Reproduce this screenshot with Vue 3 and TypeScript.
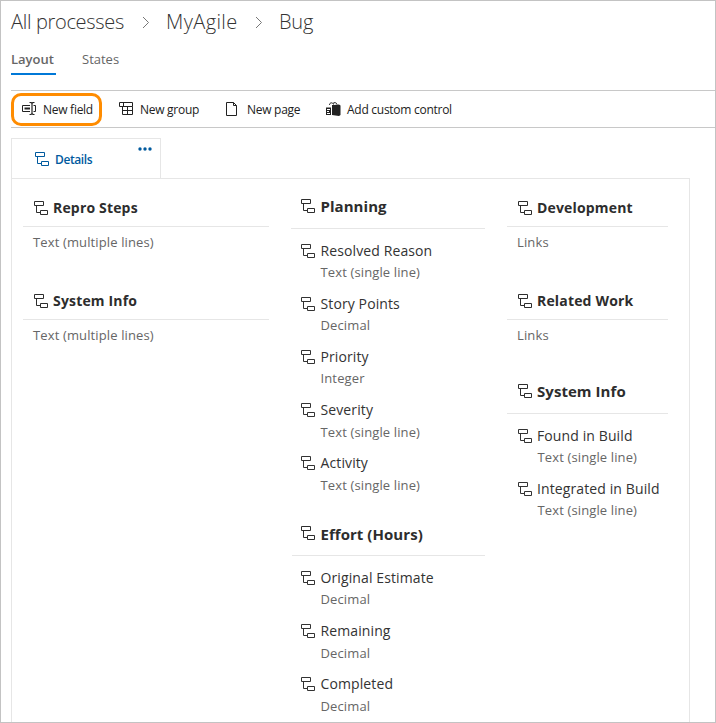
<script setup lang="ts">
import { h } from 'vue'

interface Field { name: string; type: string; loose?: boolean }
interface Group { title: string; kind: 'control' | 'fields'; type?: string; fields?: Field[] }
interface Column { id: string; groups: Group[] }

const columns: Column[] = [
  {
    id: 'left',
    groups: [
      { title: 'Repro Steps', kind: 'control', type: 'Text (multiple lines)' },
      { title: 'System Info', kind: 'control', type: 'Text (multiple lines)' },
    ],
  },
  {
    id: 'middle',
    groups: [
      {
        title: 'Planning',
        kind: 'fields',
        fields: [
          { name: 'Resolved Reason', type: 'Text (single line)' },
          { name: 'Story Points', type: 'Decimal' },
          { name: 'Priority', type: 'Integer' },
          { name: 'Severity', type: 'Text (single line)', loose: true },
          { name: 'Activity', type: 'Text (single line)', loose: true },
        ],
      },
      {
        title: 'Effort (Hours)',
        kind: 'fields',
        fields: [
          { name: 'Original Estimate', type: 'Decimal' },
          { name: 'Remaining', type: 'Decimal', loose: true },
          { name: 'Completed', type: 'Decimal', loose: true },
        ],
      },
    ],
  },
  {
    id: 'right',
    groups: [
      { title: 'Development', kind: 'control', type: 'Links' },
      { title: 'Related Work', kind: 'control', type: 'Links' },
      {
        title: 'System Info',
        kind: 'fields',
        fields: [
          { name: 'Found in Build', type: 'Text (single line)' },
          { name: 'Integrated in Build', type: 'Text (single line)' },
        ],
      },
    ],
  },
]

const TreeIcon = () =>
  h('svg', { width: 15, height: 15, viewBox: '0 0 15 15', fill: 'none', stroke: 'currentColor', 'stroke-width': 1 }, [
    h('path', { d: 'M.5.5h9v4h-9zM2.5 4.5v7h4M6.5 9.5h7v4h-7z' }),
  ])
</script>

<template>
  <div class="page">
    <nav class="crumbs">
      <span class="c1">All processes</span>
      <svg width="8" height="13" viewBox="0 0 8 13"><path d="M1 1l5.5 5.5L1 12" /></svg>
      <span class="c2">MyAgile</span>
      <svg width="8" height="13" viewBox="0 0 8 13"><path d="M1 1l5.5 5.5L1 12" /></svg>
      <span class="c3">Bug</span>
    </nav>
    <div class="pivots">
      <span class="pivot active">Layout</span>
      <span class="pivot">States</span>
    </div>
    <div class="toolbar">
      <button class="tool field">
        <svg width="15" height="14" viewBox="0 0 15 14" fill="none" stroke="currentColor">
          <path d="M8 3.500H.5v6H8M11.500 3.500h2v6h-2" /><path d="M2.500 6.500H8" stroke-width="2" />
          <path d="M7.500.5h1.500l1 1 1-1h1.500M10 1v11M7.500 12.500h1.500l1-1 1 1h1.500" stroke-width="1.200" />
        </svg>
        <span>New field</span>
      </button>
      <button class="tool group-tool">
        <svg width="15" height="14" viewBox="0 0 15 14" fill="none" stroke="currentColor">
          <path d="M.5.5h13v4H.5zM3.500 4.500v8h10v-8M3.500 8.500h10M8.500 4.500v8M4.500.5v4" />
        </svg>
        <span>New group</span>
      </button>
      <button class="tool page-tool">
        <svg width="13" height="15" viewBox="0 0 13 15" fill="none" stroke="currentColor">
          <path d="M.5.5h7l3 3v10H.5zM7.500.5v3h3" />
        </svg>
        <span>New page</span>
      </button>
      <button class="tool custom-tool">
        <svg width="15" height="14" viewBox="0 0 15 14">
          <path d="M6 3h2l5-.500 1.500 1V13L13 14 6 13z" fill="currentColor" />
          <path d="M0 5.500h5V13H0z" fill="currentColor" />
          <path d="M1 7.500h3M1 9.500h2M1 11.500h3" stroke="#fff" />
          <path d="M3.500 3C3.500.2 7 .2 7.500 2.500M7 1.500C8 .2 10.500.2 11 2.500" fill="none" stroke="currentColor" />
        </svg>
        <span>Add custom control</span>
      </button>
    </div>
    <div class="tab">
      <TreeIcon />
      <span class="tab-name">Details</span>
      <svg class="more" width="14" height="4" viewBox="0 0 14 4"><circle cx="2" cy="2" r="1.700" /><circle cx="7" cy="2" r="1.700" /><circle cx="12" cy="2" r="1.700" /></svg>
    </div>
    <main class="panel">
      <section v-for="col in columns" :key="col.id" class="column" :class="col.id">
        <div v-for="g in col.groups" :key="g.title" class="group" :class="g.kind">
          <h2 class="group-title"><TreeIcon /><span>{{ g.title }}</span></h2>
          <p v-if="g.type" class="type">{{ g.type }}</p>
          <div v-for="f in g.fields" :key="f.name" class="item" :class="{ loose: f.loose }">
            <div class="name"><TreeIcon /><span>{{ f.name }}</span></div>
            <p class="type">{{ f.type }}</p>
          </div>
        </div>
      </section>
    </main>
  </div>
</template>

<style>
body { margin: 0; background: #fff; }
</style>

<style scoped>
.page {
  box-sizing: border-box;
  width: 716px;
  height: 723px;
  overflow: hidden;
  border: 1px solid #c3c3c3;
  background: #fff;
  color: #333;
  font-family: "Open Sans", "Noto Sans", sans-serif;
  display: flex;
  flex-direction: column;
}
svg { flex: none; display: block; }
.crumbs { display: flex; align-items: center; height: 40px; padding-left: 10px; font-size: 20px; font-weight: 300; white-space: nowrap; }
.crumbs svg { margin: 3px 16px 0 18px; fill: none; stroke: #777; stroke-width: 1; }
.c1 { width: 113px; letter-spacing: -0.32px; }
.c2 { width: 71px; letter-spacing: 0.4px; }
.c3 { letter-spacing: -0.2px; }
.pivots { display: flex; gap: 26px; height: 49px; padding-left: 10px; font-size: 13px; color: #666; }
.pivot { box-sizing: border-box; height: 34px; line-height: 37px; }
.pivot.active { width: 45px; font-weight: 600; border-bottom: 2px solid #0078d7; }
.toolbar { display: flex; align-items: center; box-sizing: border-box; height: 38px; margin-left: 10px; border-top: 1px solid #c8c8c8; border-bottom: 1px solid #c8c8c8; }
.tool { box-sizing: border-box; display: flex; align-items: center; height: 33px; padding: 0; border: 0; background: none; font: 12px "Open Sans", "Noto Sans", sans-serif; letter-spacing: -0.27px; color: #222; white-space: nowrap; }
.tool span { line-height: 18px; padding-top: 2px; }
.field { width: 91px; padding-left: 8px; gap: 6px; border: 3px solid #ff8c00; border-radius: 10px; }
.group-tool { width: 107px; padding-left: 17px; gap: 6px; }
.page-tool { width: 99px; padding-left: 17px; gap: 8px; }
.custom-tool { padding-left: 18px; gap: 6px; }
.tab { box-sizing: border-box; display: flex; width: 150px; height: 40px; margin: 10px 0 0 10px; padding: 13px 8px 0 23px; border: 1px solid #e6e6e6; border-bottom: 0; color: #005a9e; }
.tab-name { margin-left: 5px; font-size: 12px; font-weight: 600; line-height: 16px; letter-spacing: -0.4px; }
.more { margin: -5px 0 0 auto; fill: currentColor; }
.panel { box-sizing: border-box; display: grid; grid-template-columns: 246px 195px 162px; column-gap: 21px; flex: 1; width: 679px; min-height: 0; margin-left: 10px; padding: 0 0 0 11px; border: 1px solid #e6e6e6; border-bottom: 0; }
.column.middle { margin-left: 1px; }
.column.right { margin-left: 1px; }
.group-title { box-sizing: border-box; display: flex; align-items: center; margin: 0; border-bottom: 1px solid #e6e6e6; font-size: 14px; font-weight: 700; letter-spacing: 0.17px; line-height: 20px; color: #2d2d2d; }
.group-title svg, .name svg { margin-right: 4px; }
.group { box-sizing: border-box; }
.control { height: 93px; padding-top: 19px; }
.control .group-title { height: 29px; padding: 0 0 8px 11px; }
.control .type { margin-left: 10px; line-height: 30px; }
.fields .group-title { height: 50px; align-items: flex-start; font-size: 15px; letter-spacing: 0.05px; }
.fields .group-title svg { margin-top: 3px; }
.middle .fields .group-title { padding: 17px 0 0 10px; }
.middle .fields + .fields .group-title { height: 39px; margin: 23px 0 0 1px; padding: 7px 0 0 9px; }
.middle .fields + .fields .group-title svg { margin-top: 2px; }
.right .fields .group-title { height: 49px; padding: 16px 0 0 11px; }
.type { margin: 0; font-size: 13px; letter-spacing: 0.13px; color: #666; white-space: nowrap; }
.item { height: 53px; padding: 11px 0 0 10px; box-sizing: border-box; }
.right .item { padding-left: 11px; }
.middle .group-title svg, .middle .name svg { margin-right: 4.5px; }
.name { display: flex; align-items: center; height: 22px; font-size: 14px; letter-spacing: 0.11px; line-height: 22px; white-space: nowrap; }
.item .type { margin-left: 19.5px; line-height: 20px; }
.item.loose .type { padding-top: 1px; }
</style>
